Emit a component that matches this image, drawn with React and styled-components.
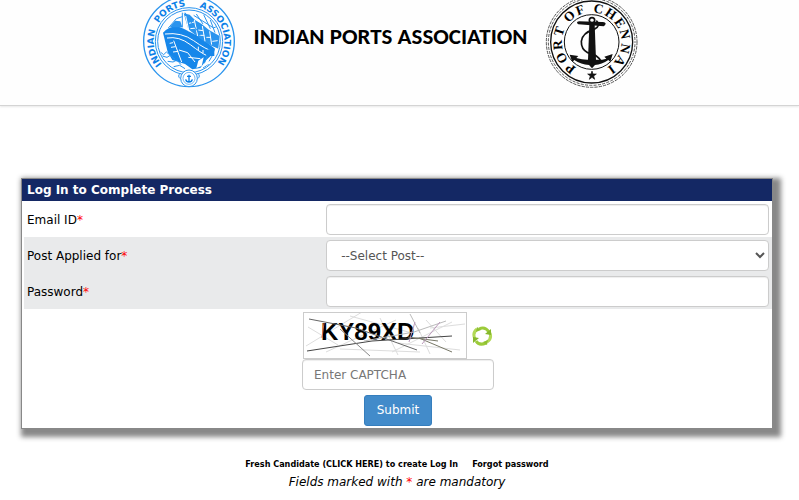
import React, { useState } from "react";
import styled, { createGlobalStyle } from "styled-components";

const GlobalStyle = createGlobalStyle`
  * {
    box-sizing: border-box;
  }

  body {
    margin: 0;
    background: #fff;
    color: #000;
    font-family: Verdana, "DejaVu Sans", sans-serif;
    font-size: 12px;
    line-height: 18px;
  }
`;

const Header = styled.header`
  display: flex;
  justify-content: center;
  align-items: flex-start;
  gap: 18px;
  height: 106px;
  padding-right: 18px;
  background: #fefefe;
  border-bottom: 1px solid #d4d4d4;
  box-shadow: 0 1px 2px #e8e8e8;
`;

const Logo = styled.svg`
  display: block;
  flex: none;
  width: 93px;
  height: 88px;
`;

const Title = styled.h1`
  margin: 0;
  padding-top: 21px;
  font-family: Calibri, Carlito, "Open Sans", sans-serif;
  font-size: 23px;
  line-height: 30px;
  font-weight: 700;
  white-space: nowrap;
`;

const Main = styled.main`
  padding: 72px 26px 0 21px;
`;

const Card = styled.form`
  border: 1px solid #888;
  background: #fff;
  box-shadow: 4px 4px 5px 4px #888;
`;

const CardTitle = styled.h2`
  margin: 0;
  padding: 2px 5px;
  background: #142864;
  color: #fff;
  font-size: 12px;
  line-height: 18px;
  font-weight: 700;
`;

const Row = styled.div`
  display: grid;
  grid-template-columns: 2fr 3fr;
  align-items: center;
  gap: 4px;
  margin: 0 0 0 2px;
  padding: 3px 3px 2px;
  background: ${(props) => (props.$shaded ? "#e9eaeb" : "#fff")};
`;

const Label = styled.label`
  display: block;
`;

const Star = styled.span`
  color: #f00;
`;

const Input = styled.input`
  display: block;
  width: ${(props) => props.$width || "100%"};
  height: 31px;
  padding: 6px 11px;
  border: 1px solid #ccc;
  border-radius: 4px;
  background: #fff;
  box-shadow: inset 0 1px 1px rgba(0, 0, 0, 0.07);
  color: #555;
  font: inherit;

  &::placeholder {
    color: #777;
    opacity: 1;
  }
`;

const Select = styled.select`
  display: block;
  width: 100%;
  height: 31px;
  padding: 5px 10px;
  border: 1px solid #ccc;
  border-radius: 4px;
  background: #fff;
  color: #555;
  font: inherit;
`;

const Actions = styled.div`
  display: flex;
  flex-direction: column;
  align-items: center;
  padding: 3px 0 2px 2px;
`;

const CaptchaLine = styled.div`
  display: flex;
  align-items: center;
  gap: 4px;
`;

const CaptchaImage = styled.svg`
  display: block;
  width: 164px;
  height: 47px;
  border: 1px solid #ccc;
`;

const RefreshButton = styled.button`
  display: block;
  padding: 0;
  border: 0;
  background: none;
  cursor: pointer;

  svg {
    display: block;
    width: 22px;
    height: 22px;
  }
`;

const SubmitButton = styled.button`
  margin-top: 5px;
  height: 31px;
  padding: 4px 12px 6px;
  border: 1px solid #357ebd;
  border-radius: 3px;
  background: #428bca;
  color: #fff;
  font: inherit;
  cursor: pointer;
`;

const Links = styled.nav`
  display: flex;
  justify-content: center;
  gap: 14px;
  margin-top: 26px;
  font-family: Tahoma, "DejaVu Sans Condensed", "Noto Sans", sans-serif;
  font-size: 9px;
  font-weight: 700;

  a {
    color: #000;
    text-decoration: none;
  }
`;

const Note = styled.p`
  margin: 0;
  text-align: center;
  font-style: italic;
`;

function PortsLogo() {
  return (
    <Logo viewBox="24 0 279 264" role="img" aria-label="Indian Ports Association">
      <defs>
        <path id="ipa-ring" d="M162 230 a106 106 0 0 1 0 -212 a106 106 0 0 1 0 212" />
        <clipPath id="ipa-clip">
          <circle cx="162" cy="124" r="92" />
        </clipPath>
      </defs>
      <g fill="none" stroke="#2a94ee">
        <circle cx="162" cy="124" r="136" strokeWidth="4" />
        <circle cx="162" cy="124" r="101" strokeWidth="3" />
        <circle cx="162" cy="124" r="94" strokeWidth="3" />
      </g>
      <g fill="#0c80e8" fontFamily="DejaVu Sans, Verdana, sans-serif" fontSize="27" fontWeight="700" textAnchor="middle">
        <text><textPath href="#ipa-ring" startOffset="22%">INDIAN</textPath></text>
        <text><textPath href="#ipa-ring" startOffset="41%">PORTS</textPath></text>
        <text><textPath href="#ipa-ring" startOffset="70%">ASSOCIATION</textPath></text>
      </g>
      <g clipPath="url(#ipa-clip)">
        {/* hull */}
        <path d="M84 98 Q100 80 126 78 L146 86 L196 112 L240 146 L236 160 L214 180 L196 204 L172 208 L150 192 L112 180 L98 156 Z" fill="#1687ea" />
        {/* deck and cranes */}
        <path d="M146 40 L164 44 L180 60 L200 72 L222 90 L254 108 L250 146 L226 136 L196 116 L160 88 Z" fill="#2a94ee" />
        <path d="M104 82 L120 62 L136 64 L142 82 Z" fill="#2a94ee" />
        <g fill="none" stroke="#fff" strokeWidth="3">
          <path d="M90 102 Q140 96 176 122 T238 156" />
          <path d="M96 114 Q132 108 166 134 T214 166" />
          <path d="M116 122 L140 186" />
          <path d="M132 150 L158 158 L180 186" />
          <path d="M152 48 L162 94 M178 60 L188 108 M202 78 L210 124 M224 94 L230 134" />
          <path d="M162 70 L178 66 M166 86 L184 84 M190 90 L204 92 M194 106 L208 106 M214 112 L228 112 M232 124 L248 122" />
          <path d="M104 130 L114 128 M108 142 L122 140 M114 156 L130 154" />
          <path d="M160 172 L196 176 M190 140 L190 150 M204 150 L204 160" />
        </g>
        <g fill="none" stroke="#2a94ee" strokeWidth="3">
          <path d="M142 82 L142 38 M150 38 L196 106 M184 42 L204 72 M206 44 L226 86 M226 60 L240 98" />
          <path d="M176 46 L236 84 L250 76 M100 84 L124 56 L142 50" />
          <path d="M76 156 l10 8 l8 -8 l12 10 M82 168 l14 4 l10 -6 l14 12 M98 184 l16 2 l12 -6 l12 14 M116 200 l18 -4 l16 10" />
          <path d="M208 190 l10 -24 l18 -8 M222 184 l14 -24 M204 204 l16 -10 l14 -2" />
        </g>
        <path d="M190 182 L206 172 L200 198 L184 204 Z" fill="#fff" />
        <path d="M218 148 h20 v20 h-24 Z" fill="#1687ea" />
      </g>
      <circle cx="162" cy="235" r="25" fill="#fff" stroke="#2a94ee" strokeWidth="3" />
      <circle cx="162" cy="235" r="18" fill="none" stroke="#2a94ee" strokeWidth="2" />
      <path d="M162 224 V245 M156 229 H168 M152 238 Q154 246 162 246 Q170 246 172 238" fill="none" stroke="#0c80e8" strokeWidth="4" />
      <path d="M136 220 q-10 8 0 16 M188 220 q10 8 0 16" fill="none" stroke="#2a94ee" strokeWidth="3" />
    </Logo>
  );
}

// each letter of the seal with its angle, clockwise from the top
const sealLetters = [
  ["P", 219], ["O", 242], ["R", 265], ["T", 288],
  ["O", 319], ["F", 340],
  ["C", 12], ["H", 34], ["E", 56], ["N", 77], ["N", 101], ["A", 124], ["I", 144],
];

function ChennaiLogo() {
  return (
    <Logo viewBox="16 0 279 264" role="img" aria-label="Port of Chennai">
      <g fill="none" stroke="#555">
        <circle cx="156" cy="126" r="136" strokeWidth="3" strokeDasharray="10 3" />
        <circle cx="156" cy="126" r="130" strokeWidth="3" strokeDasharray="9 4" strokeDashoffset="6" />
      </g>
      <g fill="none" stroke="#111">
        <circle cx="156" cy="126" r="123" strokeWidth="4" />
        <circle cx="156" cy="126" r="82" strokeWidth="3" />
      </g>
      <g fill="#000" fontFamily="Liberation Serif, Times New Roman, serif" fontSize="40" fontWeight="700" textAnchor="middle">
        {sealLetters.map(([letter, angle]) => (
          <text key={angle} x="156" y="37" transform={`rotate(${angle} 156 126)`}>{letter}</text>
        ))}
      </g>
      <path d="M157 213 l3 9 h10 l-8 6 l3 10 l-8 -6 l-8 6 l3 -10 l-8 -6 h10 Z" fill="#111" stroke="#111" strokeWidth="2" />
      <path d="M149 72 H165 L169 180 H145 Z" fill="#111" />
      <circle cx="157" cy="61" r="8" fill="#fff" stroke="#111" strokeWidth="5" />
      <path d="M112 66 Q112 71 116 73 L192 79 Q198 76 198 70 Q194 65 186 66 L118 64 Z" fill="#111" />
      <path d="M90 164 L116 168 L110 174 Q136 182 157 178 Q180 182 200 176 L194 170 L219 162 L212 186 L206 180 Q186 194 166 195 L157 205 L148 195 Q124 194 104 180 L98 186 Z" fill="#111" />
      <path d="M170 62 Q186 76 164 88 Q128 98 125 124 Q124 148 144 158 Q174 164 184 184" fill="none" stroke="#111" strokeWidth="5" />
    </Logo>
  );
}

function Captcha() {
  return (
    <CaptchaImage viewBox="304 313 162 45" role="img" aria-label="Captcha">
      <g fill="none" stroke="#ddd" strokeWidth="1">
        <path d="M308 327 L338 345 M306 346 L362 312 M326 352 L396 320 M340 349 L420 352" />
        <path d="M380 318 L398 355 M392 352 L452 322 M398 343 L460 350" />
        <path d="M426 320 L446 342 M430 328 L465 324 M350 316 L412 333 M418 328 L430 354" />
      </g>
      <text x="321" y="340" fontFamily="Liberation Sans, Arial, sans-serif" fontSize="24" fontWeight="700">KY89XD</text>
      <g fill="none" stroke="#776" strokeWidth="1">
        <path d="M307 351 L372 341 L452 336" stroke="#444" />
        <path d="M309 319 L356 328 L417 350" stroke="#666" />
        <path d="M340 329 L370 356" stroke="#888" />
        <path d="M364 341 L414 332 L446 321 M410 314 L420 333" stroke="#bbb" />
        <path d="M419 338 L452 352 M408 337 L438 341" />
        <path d="M324 323 L322 338" stroke="#d64" />
        <path d="M415 322 L409 342 M440 322 L422 344" stroke="#b9b" />
      </g>
    </CaptchaImage>
  );
}

function RefreshIcon() {
  return (
    <svg viewBox="0 0 22 22" aria-hidden="true">
      <g fill="none" strokeWidth="3">
        <path d="M4 14 Q1 8 6 4" stroke="#b2d957" />
        <path d="M8 4 Q14 1 18 7" stroke="#9ccb3a" />
        <path d="M19 8 Q21 14 16 17" stroke="#b2d957" />
        <path d="M15 18 Q8 21 5 16" stroke="#9ccb3a" />
      </g>
      <path d="M20 4 L20 10 L14 9 Z" fill="#86b82c" />
      <path d="M2 18 L2 12 L8 13 Z" fill="#86b82c" />
      <path d="M6 2 L10 5 L5 7 Z" fill="#8fc031" />
      <path d="M16 20 L12 17 L17 15 Z" fill="#8fc031" />
    </svg>
  );
}

function App() {
  const [captcha, setCaptcha] = useState("");

  return (
    <>
      <GlobalStyle />
      <Header>
        <PortsLogo />
        <Title>INDIAN PORTS ASSOCIATION</Title>
        <ChennaiLogo />
      </Header>
      <Main>
        <Card onSubmit={(e) => e.preventDefault()}>
          <CardTitle>Log In to Complete Process</CardTitle>
          <Row>
            <Label htmlFor="email">Email ID<Star>*</Star></Label>
            <Input id="email" type="text" />
          </Row>
          <Row $shaded>
            <Label htmlFor="post">Post Applied for<Star>*</Star></Label>
            <Select id="post">
              <option>--Select Post--</option>
            </Select>
          </Row>
          <Row $shaded>
            <Label htmlFor="password">Password<Star>*</Star></Label>
            <Input id="password" type="password" />
          </Row>
          <Actions>
            <CaptchaLine>
              <Captcha />
              <RefreshButton type="button" aria-label="Refresh captcha" onClick={() => setCaptcha("")}>
                <RefreshIcon />
              </RefreshButton>
            </CaptchaLine>
            <Input
              $width="192px"
              type="text"
              aria-label="Enter CAPTCHA"
              placeholder="Enter CAPTCHA"
              value={captcha}
              onChange={(e) => setCaptcha(e.target.value)}
            />
            <SubmitButton type="submit">Submit</SubmitButton>
          </Actions>
        </Card>
        <Links>
          <a href="#register">Fresh Candidate (CLICK HERE) to create Log In</a>
          <a href="#forgot">Forgot password</a>
        </Links>
        <Note>Fields marked with <Star>*</Star> are mandatory</Note>
      </Main>
    </>
  );
}

export default App;
